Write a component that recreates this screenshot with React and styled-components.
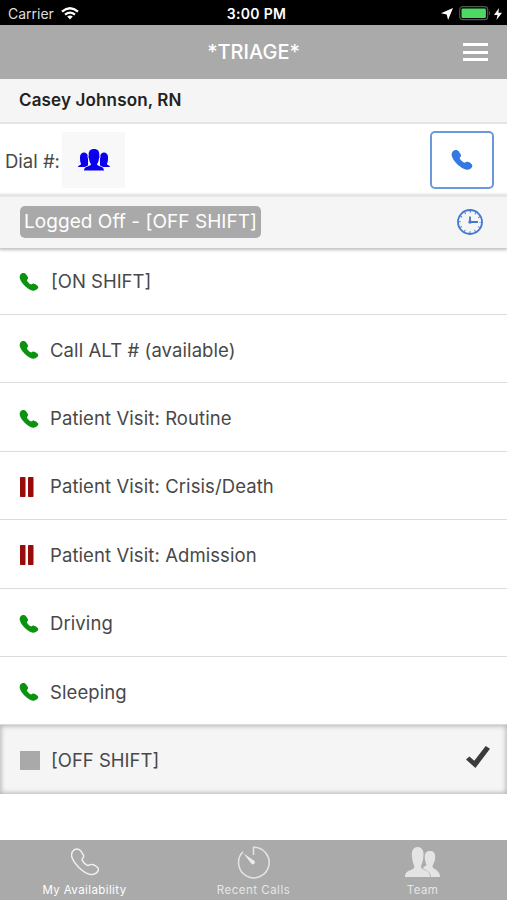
import styled, { createGlobalStyle } from "styled-components";

const HANDSET =
  "M2 4C6-1 15-2 19 5L24 13C26 18 20 20 21 23C23 27 28 32 32 34C36 35 37 31 42 32C48 33 55 39 55 43C54 49 46 54 39 53C25 51 2 30-1 14C-1 10 0 6 2 4Z";

const Phone = ({ size, color }) => (
  <svg width={size} height={size} viewBox="0 0 54 54" fill={color} overflow="visible">
    <path d={HANDSET} />
  </svg>
);

const Pause = () => (
  <svg width="14" height="20" viewBox="0 0 14 20" fill="#990a0a">
    <rect width="5.500" height="20" rx="0.800" />
    <rect x="8" width="5.500" height="20" rx="0.800" />
  </svg>
);

const Group = () => (
  <svg width="32" height="22" viewBox="0 0 32 22" fill="#0b00ee">
    <path d="M0 18C0 16 3.500 16.500 3 14.500C2 13 2 11 2 8C2 2 10 2 10 8V18Z" />
    <path d="M32 18C32 16 28.500 16.500 29 14.500C30 13 30 11 30 8C30 2 22 2 22 8V18Z" />
    <path
      d="M6 21.500C6 16.500 13 18 13 15C11.500 13.500 11.300 11 11 9.500C10.300 8.500 10.300 7 10.800 6.500C10.300 2 12.500 0 16 0C19.500 0 21.700 2 21.200 6.500C21.700 7 21.700 8.500 21 9.500C20.700 11 20.500 13.500 19 15C19 18 26 16.500 26 21.500Z"
      stroke="#f8f8f8"
      strokeWidth="1.600"
      paintOrder="stroke"
    />
  </svg>
);

const Clock = () => (
  <svg width="26" height="26" viewBox="0 0 26 26" fill="none" stroke="#4079cf">
    <circle cx="13" cy="13" r="12" strokeWidth="1.800" />
    <circle
      cx="13"
      cy="13"
      r="10.200"
      strokeWidth="2"
      strokeDasharray="1 4.340"
      strokeDashoffset="0.500"
    />
    <path d="M13 7.500V13H21" strokeWidth="1.800" />
    <circle cx="13" cy="13" r="1.700" fill="#4079cf" stroke="none" />
  </svg>
);

const Timer = () => (
  <svg width="33" height="33" viewBox="0 0 33 33" fill="none" stroke="#e4e4e4">
    <path d="M16.500 9V1.200A15.300 15.300 0 1 1 6 5.700" strokeWidth="1.500" />
    <path
      d="M6.500 7.500L17.300 14.700A2 2 0 0 1 14.500 17.700Z"
      fill="#ececec"
      stroke="none"
    />
  </svg>
);

const Team = () => (
  <svg width="35" height="30" viewBox="0 0 35 30" fill="#e4e4e4">
    <path d="M16 30V22L21.500 18C20.500 16 20.300 14.500 20 12.500C19 6.500 21 4 25 4C29 4 31 6.500 30 12.500C29.500 15.500 28 17.500 27.500 19C27 22.500 35 22 35 30Z" />
    <path
      d="M0 30C0 22 9.500 24 9.300 19.500C9 17.500 7.700 16 7.200 11.500C6 4 8 0 12.700 0C17.400 0 19.400 4 18.200 11.500C17.700 16 16.400 17.500 16.100 19.500C15.900 24 25.200 22 25.200 30Z"
      stroke="#aaa"
      strokeWidth="1.200"
      paintOrder="stroke"
    />
  </svg>
);

const statuses = [
  { label: "[ON SHIFT]", icon: "phone" },
  { label: "Call ALT # (available)", icon: "phone" },
  { label: "Patient Visit: Routine", icon: "phone" },
  { label: "Patient Visit: Crisis/Death", icon: "pause" },
  { label: "Patient Visit: Admission", icon: "pause" },
  { label: "Driving", icon: "phone" },
  { label: "Sleeping", icon: "phone" },
  { label: "[OFF SHIFT]", icon: "square", selected: true },
];

const icons = {
  phone: <Phone size={18} color="#0b930f" />,
  pause: <Pause />,
};

export default function App() {
  return (
    <Screen>
      <GlobalStyle />
      <StatusBar>
        <Carrier>
          Carrier
          <svg width="18" height="13" viewBox="0 0 18 13" fill="none" stroke="#fff" strokeWidth="2.300">
            <path d="M1 4.600Q9-2 17 4.600M4 7.700Q9 3.600 14 7.700" />
            <path d="M6.200 9.600Q9 7.300 11.800 9.600L9 12.600Z" fill="#fff" stroke="none" />
          </svg>
        </Carrier>
        <Time>3:00 PM</Time>
        <Power>
          <svg width="12" height="12" viewBox="0 0 11 11" fill="#fff">
            <path d="M11 0L6.500 11L5.200 5.900L0 4.800Z" />
          </svg>
          <svg width="32" height="15" viewBox="0 0 32 15">
            <rect x=".7" y=".7" width="28" height="13" rx="3" fill="none" stroke="#515753" strokeWidth="1.200" />
            <rect x="2.500" y="2.500" width="24.400" height="9.500" rx="1.200" fill="#4cd964" />
            <path d="M30 5Q32 7.200 30 9.500Z" fill="#616161" />
          </svg>
          <svg width="8" height="12" viewBox="0 0 8 12" fill="#fff">
            <path d="M5 0L0 7H3.500L2.500 12L8 4.700H4.400Z" />
          </svg>
        </Power>
      </StatusBar>
      <Header>
        <Title>*TRIAGE*</Title>
        <Menu aria-label="Menu">
          <span />
          <span />
          <span />
        </Menu>
      </Header>
      <UserBar>Casey Johnson, RN</UserBar>
      <DialRow>
        <DialLabel>Dial #:</DialLabel>
        <GroupButton aria-label="Contacts">
          <Group />
        </GroupButton>
        <CallButton aria-label="Call">
          <Phone size={20} color="#3478e3" />
        </CallButton>
      </DialRow>
      <CurrentRow>
        <Badge>Logged Off - [OFF SHIFT]</Badge>
        <Clock />
      </CurrentRow>
      <List>
        {statuses.map(({ label, icon, selected }) => (
          <Item key={label} $selected={selected}>
            <ItemIcon>{icons[icon] || <Square />}</ItemIcon>
            <ItemLabel $caps={label.startsWith("[")}>{label}</ItemLabel>
            {selected && (
              <svg width="24" height="22" viewBox="0 0 24 22" fill="#3b3b3b">
                <path d="M0 13.500L3.400 10.500L8.300 14.700L19.700 0L24 2.800L9.400 22Z" />
              </svg>
            )}
          </Item>
        ))}
      </List>
      <Tabs>
        <Tab $active $spacing="0.4px">
          <TabIcon>
            <svg width="28" height="28" viewBox="-2 -2 58 58" fill="none" stroke="#f1f1f1" strokeWidth="3">
              <path d={HANDSET} />
            </svg>
          </TabIcon>
          My Availability
        </Tab>
        <Tab $spacing="0.5px">
          <TabIcon>
            <Timer />
          </TabIcon>
          Recent Calls
        </Tab>
        <Tab $spacing="0.4px">
          <TabIcon>
            <Team />
          </TabIcon>
          Team
        </Tab>
      </Tabs>
    </Screen>
  );
}

const GlobalStyle = createGlobalStyle`
  * {
    box-sizing: border-box;
  }
  body {
    margin: 0;
    background: #fff;
  }
  svg {
    display: block;
    flex-shrink: 0;
  }
  button {
    padding: 0;
    border: 0;
    background: none;
  }
`;

const Screen = styled.main`
  display: flex;
  flex-direction: column;
  height: 900px;
  font-family: Inter, "Liberation Sans", sans-serif;
  color: #484848;
  white-space: nowrap;
`;

const StatusBar = styled.div`
  display: grid;
  grid-template-columns: 1fr auto 1fr;
  align-items: center;
  height: 25px;
  padding: 2px 5px 0 8px;
  background: #000;
  color: #fff;
`;

const Carrier = styled.div`
  display: flex;
  align-items: center;
  gap: 7px;
  font-size: 14px;
  color: #dedede;
`;

const Time = styled.div`
  padding-left: 3px;
  font-size: 14px;
  font-weight: 600;
  letter-spacing: 0.3px;
`;

const Power = styled.div`
  display: flex;
  align-items: center;
  justify-content: flex-end;
  gap: 6px;
  svg:last-child {
    margin-left: -3px;
  }
`;

const Header = styled.header`
  display: grid;
  grid-template-columns: 1fr auto 1fr;
  align-items: center;
  height: 54px;
  padding: 0 19px;
  background: #aaa;
`;

const Title = styled.h1`
  grid-column: 2;
  margin: 0;
  font-size: 20px;
  font-weight: 450;
  color: #fff;
`;

const Menu = styled.button`
  display: grid;
  justify-self: end;
  gap: 4.500px;
  span {
    width: 25px;
    height: 3px;
    background: #fff;
  }
`;

const UserBar = styled.div`
  height: 45px;
  padding: 10px 19px;
  border-bottom: 2px solid #e4e4e4;
  background: #f5f5f5;
  font-size: 17px;
  font-weight: 600;
  line-height: 22px;
  letter-spacing: 0.15px;
  color: #222;
`;

const DialRow = styled.div`
  display: flex;
  align-items: center;
  height: 71px;
  padding: 0 13px 0 5px;
`;

const DialLabel = styled.span`
  width: 57px;
  padding-top: 2px;
  font-size: 18.500px;
`;

const GroupButton = styled.button`
  display: grid;
  place-items: center;
  width: 63px;
  height: 56px;
  background: #f8f8f8;
`;

const CallButton = styled.button`
  display: grid;
  place-items: center;
  width: 64px;
  height: 58px;
  margin-left: auto;
  border: 2px solid #6c98dc;
  border-radius: 5px;
`;

const CurrentRow = styled.div`
  display: flex;
  align-items: center;
  justify-content: space-between;
  height: 53px;
  padding: 0 24px 1px 20px;
  border-top: 2px solid #e6e6e6;
  background: #f5f5f5;
  box-shadow: 0 1px 3px 1px rgba(0, 0, 0, 0.25);
`;

const Badge = styled.span`
  width: 241px;
  height: 32px;
  padding-left: 4px;
  border-radius: 5px;
  background: #a9a9a9;
  font-size: 19px;
  line-height: 32px;
  letter-spacing: 0.05px;
  color: #fff;
`;

const List = styled.ul`
  flex: 1;
  margin: 0;
  padding: 0;
  list-style: none;
`;

const Item = styled.li`
  display: flex;
  align-items: center;
  height: 68.400px;
  padding: 2px 17px 0 20px;
  border-bottom: ${({ $selected }) => ($selected ? "0" : "1px solid #dcdcdc")};
  background: ${({ $selected }) => ($selected ? "#f5f5f5" : "#fff")};
  ${({ $selected }) =>
    $selected &&
    "padding-top: 1px; box-shadow: inset 0 0 5px 1px rgba(0, 0, 0, 0.28);"}
  &:first-child {
    height: 67px;
    padding-top: 0;
    background: none;
  }
  > svg {
    margin: -7px 0 0 auto;
  }
`;

const ItemIcon = styled.span`
  width: 30px;
  padding-top: 1px;
`;

const Square = styled.span`
  display: block;
  width: 20px;
  height: 19px;
  background: #a9a9a9;
`;

const ItemLabel = styled.span`
  padding-left: ${({ $caps }) => ($caps ? "1px" : "0")};
  font-size: 18.500px;
  letter-spacing: ${({ $caps }) => ($caps ? "0" : "0.090px")};
`;

const Tabs = styled.nav`
  display: grid;
  grid-template-columns: repeat(3, 1fr);
  height: 60px;
  background: #aaa;
`;

const Tab = styled.a`
  display: flex;
  flex-direction: column;
  align-items: center;
  font-size: 11.500px;
  line-height: 14px;
  letter-spacing: ${({ $spacing }) => $spacing};
  color: ${({ $active }) => ($active ? "#fff" : "#e6e6e6")};
`;

const TabIcon = styled.span`
  display: grid;
  place-items: center;
  height: 43px;
  padding-top: 1px;
`;
